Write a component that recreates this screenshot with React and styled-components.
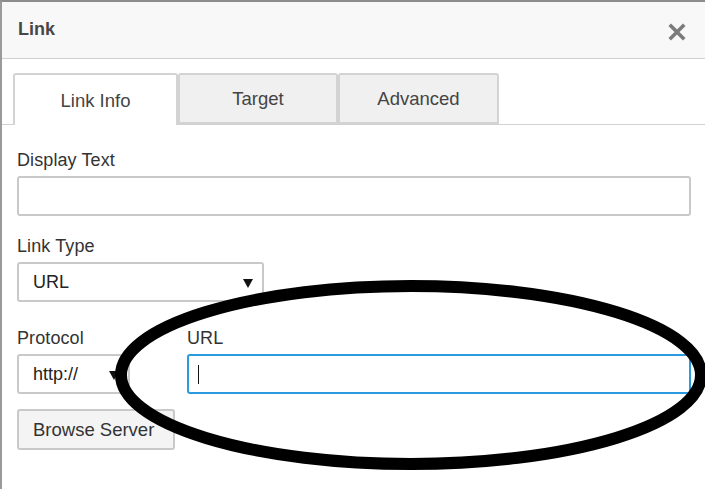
import React from "react";
import styled, { createGlobalStyle } from "styled-components";

const Global = createGlobalStyle`
  html, body {
    margin: 0;
    padding: 0;
    background: #fff;
    overflow: hidden;
  }
  body {
    font-family: "Liberation Sans", Arial, sans-serif;
  }
`;

const Dialog = styled.div`
  position: relative;
  width: 705px;
  height: 489px;
  box-sizing: border-box;
  border-top: 2px solid #8c8c8c;
  border-left: 2px solid #9a9a9a;
  background: #fff;
  color: #333;
`;

const Header = styled.div`
  height: 56px;
  display: flex;
  align-items: center;
  justify-content: space-between;
  padding: 0 19px 0 16px;
  background: #f8f8f8;
  border-bottom: 1px solid #d1d1d1;
`;

const Title = styled.h1`
  margin: 0;
  font-size: 18px;
  font-weight: bold;
  color: #474747;
  margin-top: -2px;
`;

const Close = styled.button`
  border: 0;
  background: none;
  padding: 0;
  width: 18px;
  height: 18px;
  display: flex;
  cursor: pointer;
  margin-top: 4px;
`;

const TabBar = styled.div`
  display: flex;
  padding: 14px 0 0 11px;
  border-bottom: 1px solid #d1d1d1;
`;

const Tab = styled.div`
  width: ${(p) => p.w}px;
  box-sizing: border-box;
  display: flex;
  align-items: center;
  justify-content: center;
  font-size: 18.5px;
  color: #444;
  border: 2px solid #d3d3d3;
  border-bottom: ${(p) => (p.active ? "none" : "2px solid #d3d3d3")};
  border-radius: 3px 3px 0 0;
  background: ${(p) => (p.active ? "#fff" : "#f0f0f0")};
  margin-bottom: -1px;
  height: ${(p) => (p.active ? 52 : 51)}px;
  padding-top: ${(p) => (p.active ? 1 : 0)}px;
`;

const Form = styled.div`
  padding: 25px 14px 0 15px;
`;

const Field = styled.div`
  display: flex;
  flex-direction: column;
  margin-top: ${(p) => p.mt || 0}px;
  width: ${(p) => (p.w ? `${p.w}px` : "auto")};
  flex: ${(p) => (p.w ? "none" : 1)};
`;

const Label = styled.label`
  font-size: 18px;
  line-height: 20px;
  color: #333;
  margin-bottom: 6px;
  letter-spacing: 0.1px;
`;

const TextInput = styled.div`
  height: 40px;
  box-sizing: border-box;
  border: 2px solid ${(p) => (p.focus ? "#2b9be0" : "#c9c9c9")};
  border-radius: 3px;
  background: #fff;
  display: flex;
  align-items: center;
  padding-left: 9px;
`;

const Caret = styled.span`
  width: 1px;
  height: 19px;
  background: #111;
`;

const Select = styled.div`
  width: ${(p) => p.w}px;
  height: 40px;
  box-sizing: border-box;
  border: 2px solid #c9c9c9;
  border-radius: 3px;
  background: #fff;
  display: flex;
  align-items: center;
  justify-content: space-between;
  padding: 0 9px 0 14px;
  font-size: 18px;
  color: #222;
`;

const Arrow = styled.span`
  width: 0;
  height: 0;
  border-left: 5px solid transparent;
  border-right: 5px solid transparent;
  border-top: 9px solid #111;
  margin-top: 2px;
`;

const Row = styled.div`
  display: flex;
  gap: 57px;
  margin-top: 26px;
`;

const Button = styled.button`
  margin-top: 15px;
  width: 158px;
  height: 41px;
  box-sizing: border-box;
  border: 2px solid #c9c9c9;
  border-radius: 3px;
  background: #f4f4f4;
  font-family: "Liberation Sans", Arial, sans-serif;
  font-size: 18.5px;
  color: #333;
  text-align: left;
  padding-left: 14px;
  white-space: nowrap;
  overflow: hidden;
`;

const Annotation = styled.svg`
  position: absolute;
  left: 0;
  top: 0;
  pointer-events: none;
`;

export default function App() {
  return (
    <>
      <Global />
      <Dialog>
        <Header>
          <Title>Link</Title>
          <Close aria-label="Close">
            <svg width="18" height="18" viewBox="0 0 18 18">
              <path d="M3 3 L15 15 M15 3 L3 15" stroke="#7b7b7b" strokeWidth="3.6" strokeLinecap="square" />
            </svg>
          </Close>
        </Header>
        <TabBar>
          <Tab w={165} active>Link Info</Tab>
          <Tab w={160}>Target</Tab>
          <Tab w={161}>Advanced</Tab>
        </TabBar>
        <Form>
          <Field>
            <Label>Display Text</Label>
            <TextInput />
          </Field>
          <Field mt={20}>
            <Label>Link Type</Label>
            <Select w={247}>
              URL
              <Arrow />
            </Select>
          </Field>
          <Row>
            <Field w={113}>
              <Label>Protocol</Label>
              <Select w={113}>
                http://
                <Arrow />
              </Select>
            </Field>
            <Field>
              <Label>URL</Label>
              <TextInput focus>
                <Caret />
              </TextInput>
            </Field>
          </Row>
          <Button>Browse Server</Button>
        </Form>
        <Annotation width="705" height="489" viewBox="0 0 705 489">
          <ellipse cx="409" cy="373" rx="290" ry="89" fill="none" stroke="#000" strokeWidth="12" />
        </Annotation>
      </Dialog>
    </>
  );
}
